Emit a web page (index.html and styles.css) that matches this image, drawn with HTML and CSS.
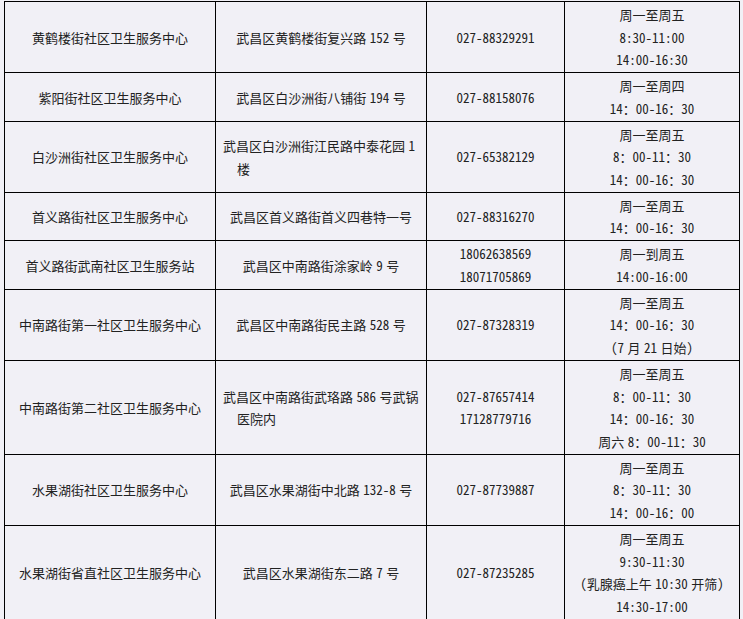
FILE: index.html
```html
<!DOCTYPE html>
<html lang="zh-CN">
<head>
<meta charset="utf-8">
<title>武昌区社区卫生服务中心</title>
<link rel="stylesheet" href="styles.css">
</head>
<body>
<table class="sheet">
  <colgroup>
    <col class="c-name"><col class="c-addr"><col class="c-tel"><col class="c-time">
  </colgroup>
  <tbody>
    <tr>
      <td>黄鹤楼街社区卫生服务中心</td>
      <td>武昌区黄鹤楼街复兴路 152 号</td>
      <td>027-88329291</td>
      <td>周一至周五<br>8:30-11:00<br>14:00-16:30</td>
    </tr>
    <tr>
      <td>紫阳街社区卫生服务中心</td>
      <td>武昌区白沙洲街八铺街 194 号</td>
      <td>027-88158076</td>
      <td>周一至周四<br>14：00-16：30</td>
    </tr>
    <tr>
      <td>白沙洲街社区卫生服务中心</td>
      <td class="wrap">武昌区白沙洲街江民路中泰花园 1<br>楼</td>
      <td>027-65382129</td>
      <td>周一至周五<br>8：00-11：30<br>14：00-16：30</td>
    </tr>
    <tr>
      <td>首义路街社区卫生服务中心</td>
      <td>武昌区首义路街首义四巷特一号</td>
      <td>027-88316270</td>
      <td>周一至周五<br>14：00-16：30</td>
    </tr>
    <tr>
      <td>首义路街武南社区卫生服务站</td>
      <td>武昌区中南路街涂家岭 9 号</td>
      <td>18062638569<br>18071705869</td>
      <td>周一到周五<br>14:00-16:00</td>
    </tr>
    <tr>
      <td>中南路街第一社区卫生服务中心</td>
      <td>武昌区中南路街民主路 528 号</td>
      <td>027-87328319</td>
      <td>周一至周五<br>14：00-16：30<br>（7 月 21 日始）</td>
    </tr>
    <tr>
      <td>中南路街第二社区卫生服务中心</td>
      <td class="wrap">武昌区中南路街武珞路 586 号武锅<br>医院内</td>
      <td>027-87657414<br>17128779716</td>
      <td>周一至周五<br>8：00-11：30<br>14：00-16：30<br>周六 8：00-11：30</td>
    </tr>
    <tr>
      <td>水果湖街社区卫生服务中心</td>
      <td>武昌区水果湖街中北路 132-8 号</td>
      <td>027-87739887</td>
      <td>周一至周五<br>8：30-11：30<br>14：00-16：00</td>
    </tr>
    <tr>
      <td>水果湖街省直社区卫生服务中心</td>
      <td>武昌区水果湖街东二路 7 号</td>
      <td>027-87235285</td>
      <td>周一至周五<br>9:30-11:30<br>（乳腺癌上午 10:30 开筛）<br>14:30-17:00</td>
    </tr>
  </tbody>
</table>
</body>
</html>
```

FILE: styles.css
```css
html, body {
  margin: 0;
  padding: 0;
  background: #f1f0f6;
}

body {
  padding: 1px 0 0 4px;
  font-family: "Noto Sans CJK SC", "Noto Sans", sans-serif;
  font-size: 13px;
  font-feature-settings: "hwid" 1;
  color: #222;
}

.sheet {
  border-collapse: collapse;
  table-layout: fixed;
  width: 735px;
}

.c-name { width: 211px; }
.c-addr { width: 211px; }
.c-tel { width: 138px; }
.c-time { width: 175px; }

.sheet td {
  border: 1px solid #000;
  padding: 2px 0 0;
  line-height: 22.72px;
  text-align: center;
  vertical-align: middle;
  white-space: nowrap;
  word-spacing: -3px;
}

.sheet td.wrap {
  text-align: left;
  padding-left: 21px;
  text-indent: -14px;
}
```
